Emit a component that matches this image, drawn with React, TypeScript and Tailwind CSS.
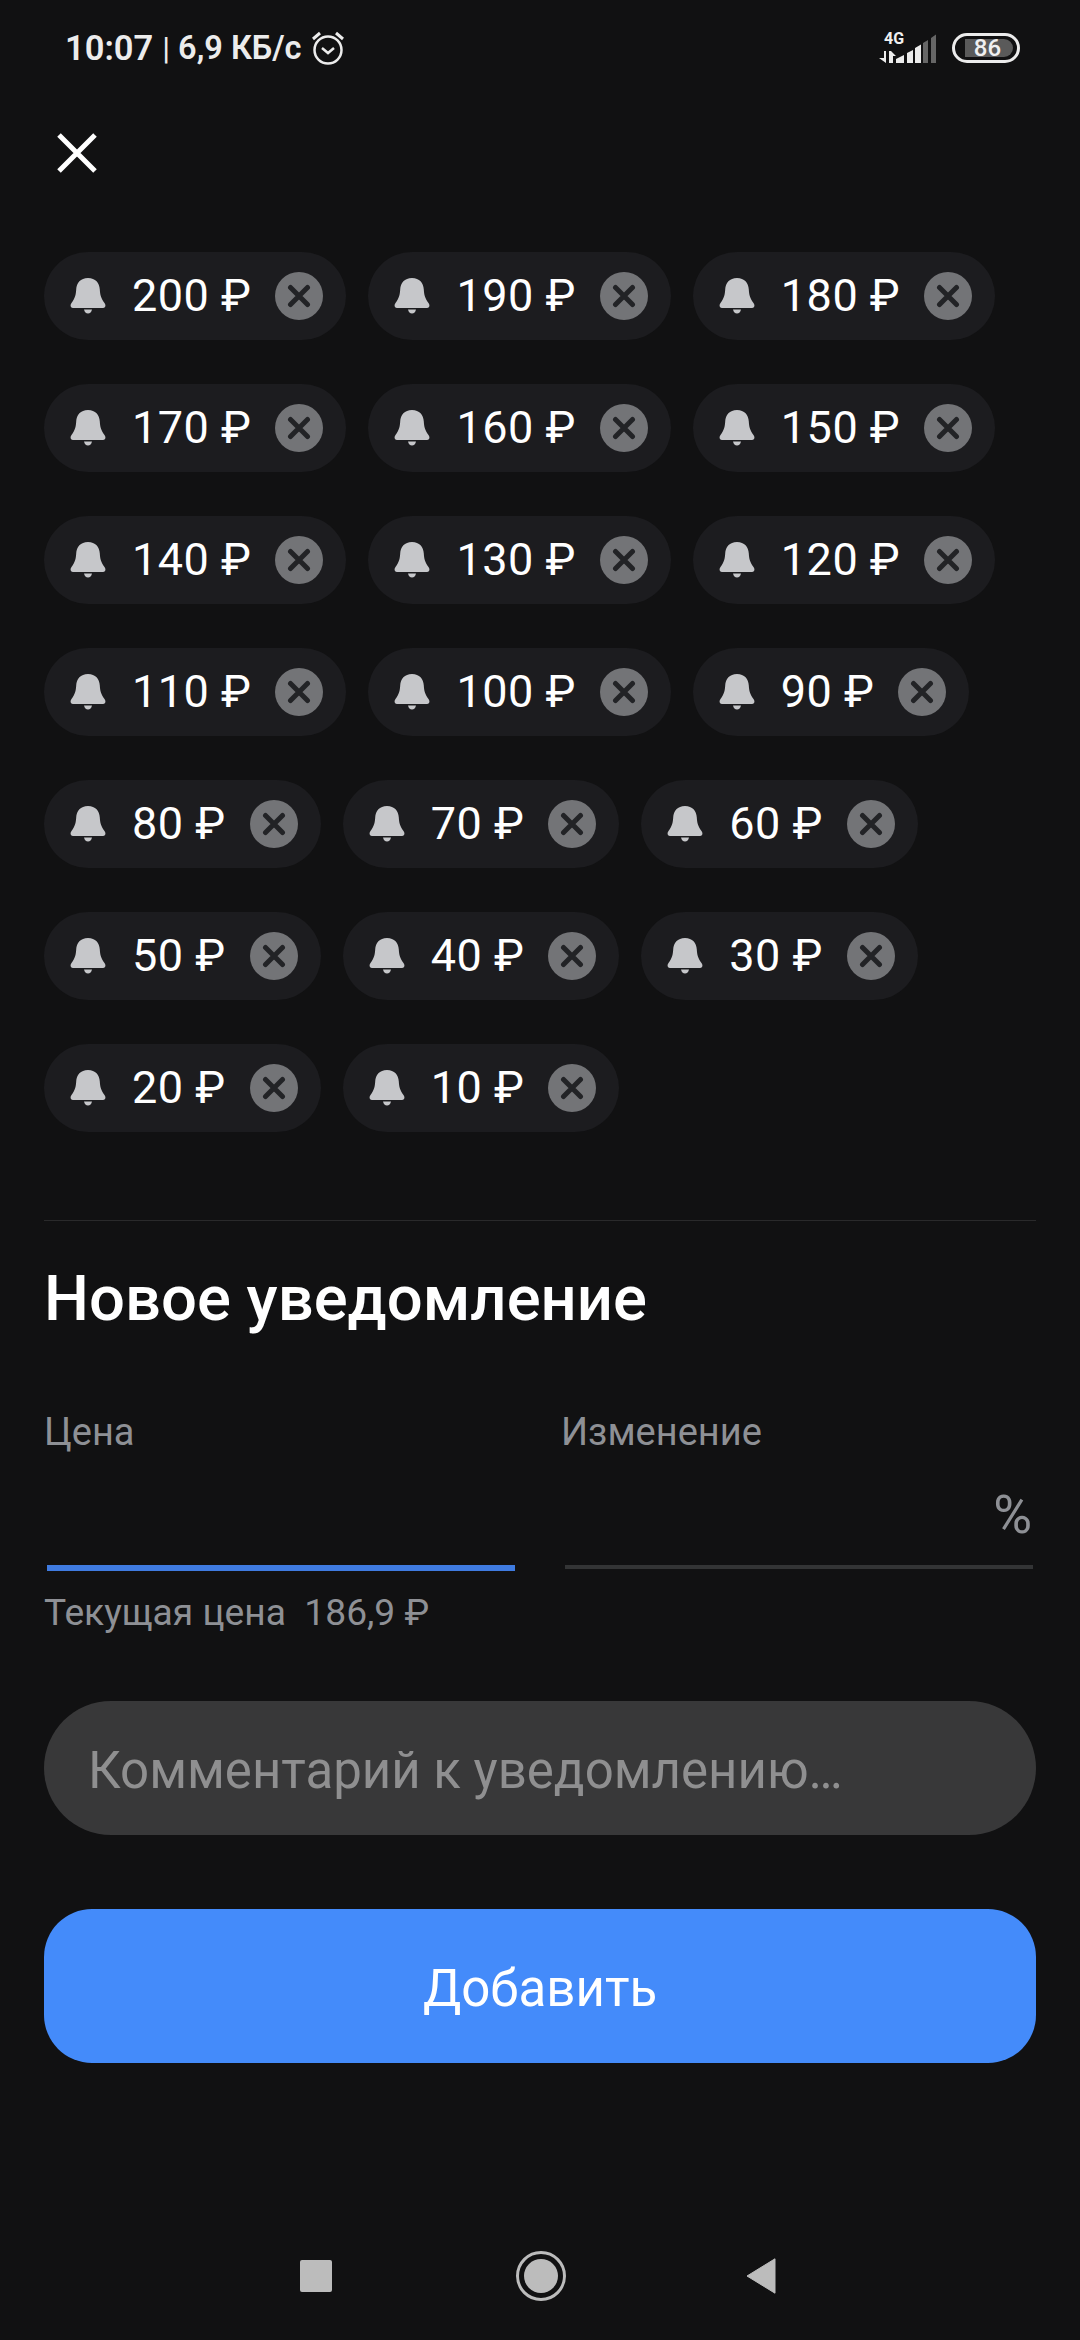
import React from 'react';

const rows = [
  [200, 190, 180],
  [170, 160, 150],
  [140, 130, 120],
  [110, 100, 90],
  [80, 70, 60],
  [50, 40, 30],
  [20, 10],
];

const BellIcon = () => (
  <svg width="36" height="36" viewBox="0 0 36 36" className="shrink-0" fill="#c6c7ca">
    <path d="M18 0C10.500 0 6.500 5 6.200 11.500c-.3 5-1 8.500-4.700 13.500-1.700 2.300-1 5 1.500 5h30c2.500 0 3.200-2.700 1.500-5-3.700-5-4.400-8.500-4.700-13.500C29.500 5 25.500 0 18 0z" />
    <path d="M14 31.500h8c-.5 2.500-2 4-4 4s-3.500-1.500-4-4z" />
  </svg>
);

const PriceChip = ({ price }: { price: number }) => (
  <div className="flex h-[88px] items-center rounded-[44px] bg-[#1c1c1f] pl-[26px] pr-[23px]">
    <BellIcon />
    <span className="ml-[26px] pb-[2px] text-[45px] leading-none tracking-[0.5px] text-white whitespace-nowrap">{price} ₽</span>
    <span className="ml-[24px] flex h-12 w-12 items-center justify-center rounded-full bg-[#737477]">
      <svg width="24" height="24" viewBox="0 0 24 24">
        <path d="M3.500 3.500l17 17M20.500 3.500l-17 17" stroke="#222326" strokeWidth="5" strokeLinecap="round" />
      </svg>
    </span>
  </div>
);

const StatusBar = () => (
  <div className="flex h-[96px] items-center justify-between pl-[65px] pr-[60px] text-[#ececec]">
    <div className="flex items-center">
      <span className="text-[34.500px] font-semibold leading-none">10:07</span>
      <span className="ml-[9px] text-[32px] leading-none">|</span>
      <span className="ml-[8px] text-[32.500px] font-semibold leading-none">6,9 КБ/с</span>
      <svg width="34" height="36" viewBox="0 0 34 36" className="ml-[9px]" fill="none" stroke="#ececec">
        <circle cx="17" cy="20" r="13.500" strokeWidth="2.500" />
        <path d="M11 18l6 5 6-5" strokeWidth="2.500" />
        <path d="M2 9l7-6M32 9l-7-6" strokeWidth="3" />
      </svg>
    </div>
    <div className="flex items-center">
      <div className="relative h-[34px] w-[60px]">
        <span className="absolute left-[6px] top-0 text-[16px] font-bold leading-none text-[#f0f0f0]">4G</span>
        <svg width="60" height="34" viewBox="0 0 60 34" className="absolute left-0 top-0">
          <path d="M6 20h2v12L1 27h5zM11 20h2l5 5h-3v7h-4z" fill="#ececec" />
          <path d="M18 32v-4l8-4v8zM29 32V22l6-3v13zM37 32V17l6-3.500V32z" fill="#ececec" />
          <path d="M45 32V12l5-3v23zM53 32V7l5-3.500V32z" fill="#666666" />
        </svg>
      </div>
      <div className="ml-[14px] flex h-[30px] w-[68px] items-center rounded-[15px] border-[3px] border-[#ececec] pl-[10px] pr-[4px] py-[3px]">
        <div className="flex h-full w-full items-center justify-center rounded-r-[9px] bg-[#5a5a5a] pr-[3px] text-[24px] font-medium leading-none text-[#f0f0f0]">
          86
        </div>
      </div>
    </div>
  </div>
);

export default function App() {
  return (
    <div
      className="flex h-[2340px] w-[1080px] flex-col overflow-hidden bg-[#111112] text-white"
      style={{ fontFamily: 'Roboto, "Noto Sans", sans-serif' }}
    >
      <StatusBar />

      <div className="pl-[56px] pt-[36px]">
        <svg width="42" height="42" viewBox="0 0 42 42" className="block">
          <path d="M3 3l36 36M39 3L3 39" stroke="#ffffff" strokeWidth="5" />
        </svg>
      </div>

      {/* Notification chips */}
      <div className="mt-[78px] flex flex-col gap-11 px-11">
        {rows.map((row) => (
          <div key={row[0]} className="flex gap-[22px]">
            {row.map((price) => (
              <PriceChip key={price} price={price} />
            ))}
          </div>
        ))}
      </div>

      <div className="mx-11 mt-[88px] h-px bg-[#2a2a2b]" />

      <h2 className="ml-11 mt-[40px] text-[63.400px] font-medium leading-[74px]">Новое уведомление</h2>

      {/* Price + change */}
      <div className="mt-[75px] flex gap-[46px] px-11">
        <div className="w-[471px]">
          <div className="text-[38px] leading-[44px] text-[#8e9095]">Цена</div>
          <div className="ml-[3px] mt-[111px] h-[6px] w-[468px] bg-[#3f7be0]" />
        </div>
        <div className="flex-1">
          <div className="text-[38px] leading-[44px] text-[#8e9095]">Изменение</div>
          <div className="mt-[35px] pr-[4px] text-right text-[53px] leading-[52px] text-[#8e9095]">%</div>
          <div className="ml-1 mt-[24px] h-1 w-[468px] bg-[#333435]" />
        </div>
      </div>

      <div className="ml-11 mt-[19px] text-[37.200px] leading-[44px] text-[#8e9095]">Текущая цена&nbsp; 186,9 ₽</div>

      <div className="mx-11 mt-[67px] flex h-[134px] items-center rounded-[67px] bg-[#383839] pl-11 pt-[6px] text-[51px] text-[#8f8f90]">
        Комментарий к уведомлению…
      </div>

      <button className="mx-11 mt-[74px] h-[154px] rounded-[48px] bg-[#448bfa] pt-[6px] text-[51px] text-white">Добавить</button>

      {/* Android nav bar */}
      <div className="mt-auto flex h-[110px] items-center pb-[18px]">
        <div className="ml-[300px] h-[32px] w-[32px] rounded-[2px] bg-[#bcbcbc]" />
        <div className="ml-[184px] flex h-[50px] w-[50px] items-center justify-center rounded-full border-[3px] border-[#bcbcbc]">
          <div className="h-[34px] w-[34px] rounded-full bg-[#bcbcbc]" />
        </div>
        <svg width="30" height="36" viewBox="0 0 30 36" className="ml-[180px]">
          <path d="M29 .8v34.400L1 18z" fill="#bcbcbc" stroke="#bcbcbc" strokeLinejoin="round" />
        </svg>
      </div>
    </div>
  );
}
